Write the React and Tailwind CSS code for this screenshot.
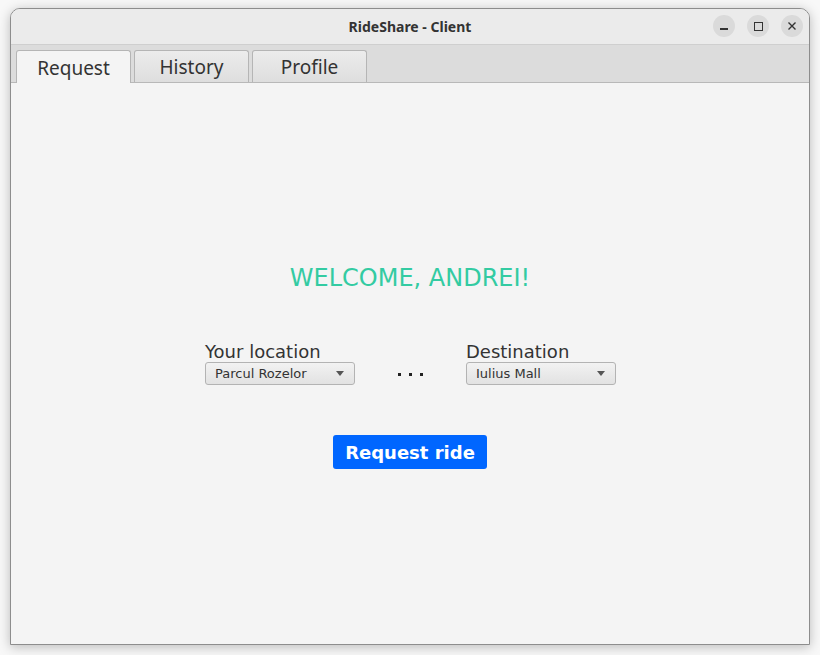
import React from 'react';

const Combo = ({ value }) => (
    <div className="flex items-center justify-between w-[150px] h-[23px] pl-[9px] pr-[10px] rounded-[3px] border border-[#b3b3b3] bg-gradient-to-b from-[#f2f2f2] to-[#e2e2e2] text-[13px] text-[#333] font-['DejaVu_Sans',sans-serif]">
        <span>{value}</span>
        <span className="w-0 h-0 border-l-[4.5px] border-r-[4.5px] border-t-[5px] border-l-transparent border-r-transparent border-t-[#555]"></span>
    </div>
);

const WinButton = ({ children }) => (
    <div className="w-[22px] h-[22px] rounded-full bg-[#dadada] flex items-center justify-center">
        {children}
    </div>
);

export default function App() {
    const tabs = ['Request', 'History', 'Profile'];

    return (
        <div className="w-[820px] h-[655px] bg-[#f8f8f8] pt-[8px] pl-[10px]">
            <div className="w-[800px] h-[637px] flex flex-col rounded-t-[10px] border border-[#8d8d8d] shadow-[0_2px_12px_rgba(0,0,0,0.25)] overflow-hidden bg-[#f4f4f4]">
                {/* title bar */}
                <div className="relative h-[36px] shrink-0 bg-[#ebebeb] border-b border-[#cfcfcf] flex items-center justify-center">
                    <span className="text-[14px] font-bold text-[#333] font-['Noto_Sans',sans-serif]">RideShare - Client</span>
                    <div className="absolute right-[6px] top-[6px] flex gap-[12px]">
                        <WinButton>
                            <span className="w-[8px] h-[1.5px] bg-[#333] mt-[6px]"></span>
                        </WinButton>
                        <WinButton>
                            <span className="w-[9px] h-[9px] border border-[#333]"></span>
                        </WinButton>
                        <WinButton>
                            <svg width="10" height="10" viewBox="0 0 10 10">
                                <path d="M1.5 1.5 L8.5 8.5 M8.5 1.5 L1.5 8.5" stroke="#333" strokeWidth="1.4" />
                            </svg>
                        </WinButton>
                    </div>
                </div>

                {/* tab header */}
                <div className="h-[38px] shrink-0 bg-[#dcdcdc] border-b border-[#b8b8b8] flex items-end pl-[5px] gap-[3px]">
                    {tabs.map((t, i) => (
                        <div
                            key={t}
                            className={`w-[115px] h-[32px] pt-[2px] rounded-t-[3px] border border-b-0 border-[#b5b5b5] flex items-center justify-center text-[19px] text-[#333] font-['Noto_Sans',sans-serif] ${i === 0 ? 'bg-[#f4f4f4] h-[33px] -mb-px' : 'bg-gradient-to-b from-[#ececec] to-[#dedede]'}`}
                        >
                            {t}
                        </div>
                    ))}
                </div>

                {/* content */}
                <div className="flex-1 flex flex-col items-center pt-[180px] font-['DejaVu_Sans',sans-serif]">
                    <h1 className="text-[24px] text-[#33cba2] leading-[30px]">WELCOME, ANDREI!</h1>

                    <div className="flex items-end mt-[50px] ml-[1px]">
                        <div className="flex flex-col">
                            <span className="text-[18px] text-[#333] leading-[18px] mb-[1px]">Your location</span>
                            <Combo value="Parcul Rozelor" />
                        </div>
                        <div className="w-[111px] flex justify-center gap-[8px] pb-[9px]">
                            <span className="w-[3px] h-[3px] bg-[#222]"></span>
                            <span className="w-[3px] h-[3px] bg-[#222]"></span>
                            <span className="w-[3px] h-[3px] bg-[#222]"></span>
                        </div>
                        <div className="flex flex-col">
                            <span className="text-[18px] text-[#333] leading-[18px] mb-[1px]">Destination</span>
                            <Combo value="Iulius Mall" />
                        </div>
                    </div>

                    <button className="mt-[50px] w-[154px] h-[34px] rounded-[3px] bg-[#0066ff] text-white text-[18px] font-bold">
                        Request ride
                    </button>
                </div>
            </div>
        </div>
    );
}
